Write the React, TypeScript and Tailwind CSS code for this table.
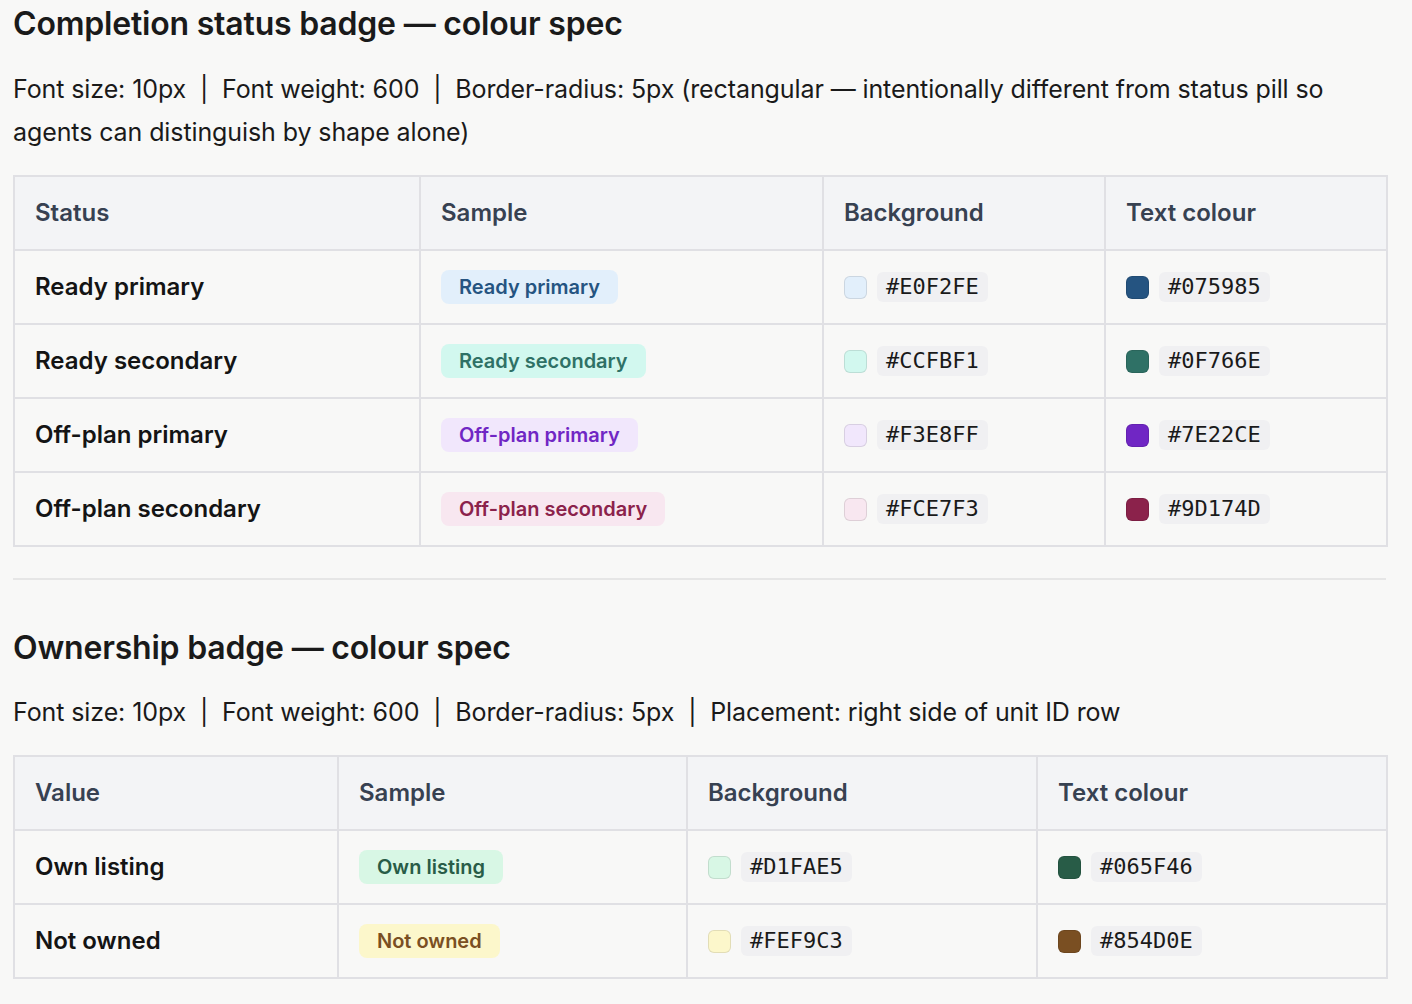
import React from "react";

// hex = the spec value shown as text; show = how it reads on screen
type Row = { label: string; bg: string; fg: string; bgShow: string; fgShow: string };

const statusRows: Row[] = [
  { label: "Ready primary", bg: "#E0F2FE", fg: "#075985", bgShow: "#e2effb", fgShow: "#255481" },
  { label: "Ready secondary", bg: "#CCFBF1", fg: "#0F766E", bgShow: "#d2f8ef", fgShow: "#2f7166" },
  { label: "Off-plan primary", bg: "#F3E8FF", fg: "#7E22CE", bgShow: "#f1e7fc", fgShow: "#7026c4" },
  { label: "Off-plan secondary", bg: "#FCE7F3", fg: "#9D174D", bgShow: "#f8e7f0", fgShow: "#8b224b" },
];

const ownershipRows: Row[] = [
  { label: "Own listing", bg: "#D1FAE5", fg: "#065F46", bgShow: "#d8f7e5", fgShow: "#285c47" },
  { label: "Not owned", bg: "#FEF9C3", fg: "#854D0E", bgShow: "#fcf7cb", fgShow: "#7a4f22" },
];

function Swatch({ hex, show }: { hex: string; show: string }) {
  return (
    <div className="flex items-center gap-[10px]">
      <span
        className="block w-[23px] h-[23px] rounded-[6px] border-[1.5px] border-black/10"
        style={{ backgroundColor: show }}
      />
      <code className="px-[9px] py-[2px] rounded-[6px] bg-[#f0f0f2] font-['DejaVu_Sans_Mono',monospace] text-[22px] leading-[26px] text-[#1a1a1a]">
        {hex}
      </code>
    </div>
  );
}

function SpecTable({
  first,
  rows,
  cols,
}: {
  first: string;
  rows: Row[];
  cols: string[];
}) {
  const headers = [first, "Sample", "Background", "Text colour"];
  return (
    <table className="mt-[21px] border-collapse table-fixed w-[1373px]">
      <colgroup>
        {cols.map((w, i) => (
          <col key={i} className={w} />
        ))}
      </colgroup>
      <thead>
        <tr className="bg-[#f3f4f6] h-[74px]">
          {headers.map((h) => (
            <th
              key={h}
              className="border-2 border-[#e0e0e4] px-[20px] text-left text-[24px] font-semibold text-[#374151]"
            >
              {h}
            </th>
          ))}
        </tr>
      </thead>
      <tbody>
        {rows.map((r) => (
          <tr key={r.label} className="h-[74px]">
            <td className="border-2 border-[#e0e0e4] px-[20px] text-[24px] font-semibold text-[#141414]">
              {r.label}
            </td>
            <td className="border-2 border-[#e0e0e4] px-[20px]">
              <span
                className="inline-block px-[18px] h-[34px] leading-[35px] rounded-[8px] text-[20px] font-semibold"
                style={{ backgroundColor: r.bgShow, color: r.fgShow }}
              >
                {r.label}
              </span>
            </td>
            <td className="border-2 border-[#e0e0e4] px-[20px]">
              <Swatch hex={r.bg} show={r.bgShow} />
            </td>
            <td className="border-2 border-[#e0e0e4] px-[20px]">
              <Swatch hex={r.fg} show={r.fgShow} />
            </td>
          </tr>
        ))}
      </tbody>
    </table>
  );
}

export default function App() {
  return (
    <div className="min-h-screen bg-[#f8f8f7] font-['Inter',sans-serif] text-[#1a1a1a] pl-[13px] pr-[26px] pt-[6px] pb-10">
      <h2 className="text-[32px] leading-[36px] font-semibold tracking-[-0.2px]">
        Completion status badge — colour spec
      </h2>
      <p className="mt-[26px] text-[25px] leading-[43px] tracking-[-0.1px]">
        Font size: 10px&nbsp; |&nbsp; Font weight: 600&nbsp; |&nbsp; Border-radius: 5px (rectangular — intentionally
        different from status pill so agents can distinguish by shape alone)
      </p>
      <SpecTable
        first="Status"
        rows={statusRows}
        cols={["w-[406px]", "w-[403px]", "w-[282px]", "w-[282px]"]}
      />
      <hr className="mt-[31px] border-0 h-[2px] bg-[#e6e6e6] w-[1373px]" />
      <h2 className="mt-[50px] text-[32px] leading-[36px] font-semibold tracking-[-0.2px]">
        Ownership badge — colour spec
      </h2>
      <p className="mt-[25px] text-[25px] leading-[43px] tracking-[-0.1px]">
        Font size: 10px&nbsp; |&nbsp; Font weight: 600&nbsp; |&nbsp; Border-radius: 5px&nbsp; |&nbsp; Placement: right side
        of unit ID row
      </p>
      <SpecTable
        first="Value"
        rows={ownershipRows}
        cols={["w-[324px]", "w-[349px]", "w-[350px]", "w-[350px]"]}
      />
    </div>
  );
}
